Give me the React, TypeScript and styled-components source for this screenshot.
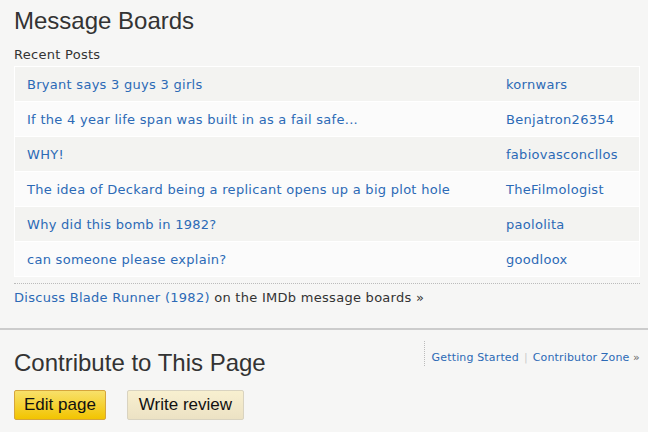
import React from "react";
import styled, { createGlobalStyle } from "styled-components";

const GlobalStyle = createGlobalStyle`
  body {
    margin: 0;
    background: #f6f6f5;
    font-family: "DejaVu Sans", Verdana, sans-serif;
    font-size: 13px;
    letter-spacing: 0.28px;
    color: #333;
  }
`;

const posts = [
  { title: "Bryant says 3 guys 3 girls", user: "kornwars" },
  { title: "If the 4 year life span was built in as a fail safe...", user: "Benjatron26354" },
  { title: "WHY!", user: "fabiovasconcllos" },
  { title: "The idea of Deckard being a replicant opens up a big plot hole", user: "TheFilmologist" },
  { title: "Why did this bomb in 1982?", user: "paololita" },
  { title: "can someone please explain?", user: "goodloox" },
];

function App() {
  return (
    <>
      <GlobalStyle />
      <Page>
        <Section>
          <Heading>Message Boards</Heading>
          <SubHeading>Recent Posts</SubHeading>
          <PostTable>
            <tbody>
              {posts.map((p, i) => (
                <PostRow key={p.user} $odd={i % 2 === 0}>
                  <TitleCell>
                    <Link href="#">{p.title}</Link>
                  </TitleCell>
                  <UserCell>
                    <Link href="#">{p.user}</Link>
                  </UserCell>
                </PostRow>
              ))}
            </tbody>
          </PostTable>
          <SeeMore>
            <Link href="#">Discuss Blade Runner</Link> <Link href="#">(1982)</Link> on the IMDb
            message boards »
          </SeeMore>
        </Section>
        <Divider />
        <Section>
          <ContributeHeader>
            <Heading>Contribute to This Page</Heading>
            <SideLinks>
              <Link href="#">Getting Started</Link>
              <Pipe>|</Pipe>
              <Link href="#">Contributor Zone</Link> »
            </SideLinks>
          </ContributeHeader>
          <Buttons>
            <Button $primary>Edit page</Button>
            <Button>Write review</Button>
          </Buttons>
        </Section>
      </Page>
    </>
  );
}

export default App;

const Page = styled.div`
  width: 648px;
  height: 432px;
  overflow: hidden;
`;

const Section = styled.div`
  padding: 0 8px 0 14px;
`;

const Heading = styled.h2`
  margin: 0;
  padding-top: 7px;
  font-family: "Liberation Sans", Arial, sans-serif;
  font-weight: normal;
  font-size: 24px;
  line-height: 28px;
  letter-spacing: 0;
  color: #333;
`;

const SubHeading = styled.div`
  margin-top: 12px;
  line-height: 16px;
  color: #333;
`;

const PostTable = styled.table`
  width: 626px;
  margin-top: 3px;
  border-collapse: collapse;
  border: 1px solid #fff;
`;

const PostRow = styled.tr<{ $odd: boolean }>`
  height: 35px;
  background: ${(p) => (p.$odd ? "#f3f3f1" : "#fbfbfb")};
  border-bottom: 1px solid #fff;
`;

const TitleCell = styled.td`
  padding: 0 12px;
`;

const UserCell = styled.td`
  width: 133px;
  padding: 0;
`;

const Link = styled.a`
  color: #2c6ab6;
  text-decoration: none;
`;

const SeeMore = styled.div`
  margin-top: 6px;
  border-top: 1px dotted #bbb;
  padding-top: 5px;
  line-height: 18px;
`;

const Divider = styled.div`
  margin-top: 21px;
  border-top: 2px solid #ccc;
`;

const ContributeHeader = styled.div`
  display: flex;
  justify-content: space-between;
  align-items: flex-start;
  padding-top: 11px;
  h2 {
    padding-top: 8px;
  }
`;

const SideLinks = styled.div`
  padding: 10px 0 1px 7px;
  border-left: 1px dotted #bbb;
  font-size: 11px;
  line-height: 14px;
  letter-spacing: 0.15px;
  color: #666;
`;

const Pipe = styled.span`
  color: #ccc;
  margin: 0 5px;
`;

const Buttons = styled.div`
  display: flex;
  gap: 21px;
  margin-top: 13px;
`;

const Button = styled.button<{ $primary?: boolean }>`
  height: 30px;
  padding: 0 ${(p) => (p.$primary ? "9px" : "11px")};
  font-family: "Liberation Sans", Arial, sans-serif;
  font-size: 17px;
  letter-spacing: 0;
  color: #111;
  border-radius: 2px;
  cursor: pointer;
  border: 1px solid ${(p) => (p.$primary ? "#d6a53c" : "#d9d3c0")};
  background: ${(p) =>
    p.$primary
      ? "linear-gradient(#f8e06a, #f2c400)"
      : "linear-gradient(#f8f0d0, #ece2c4)"};
`;
